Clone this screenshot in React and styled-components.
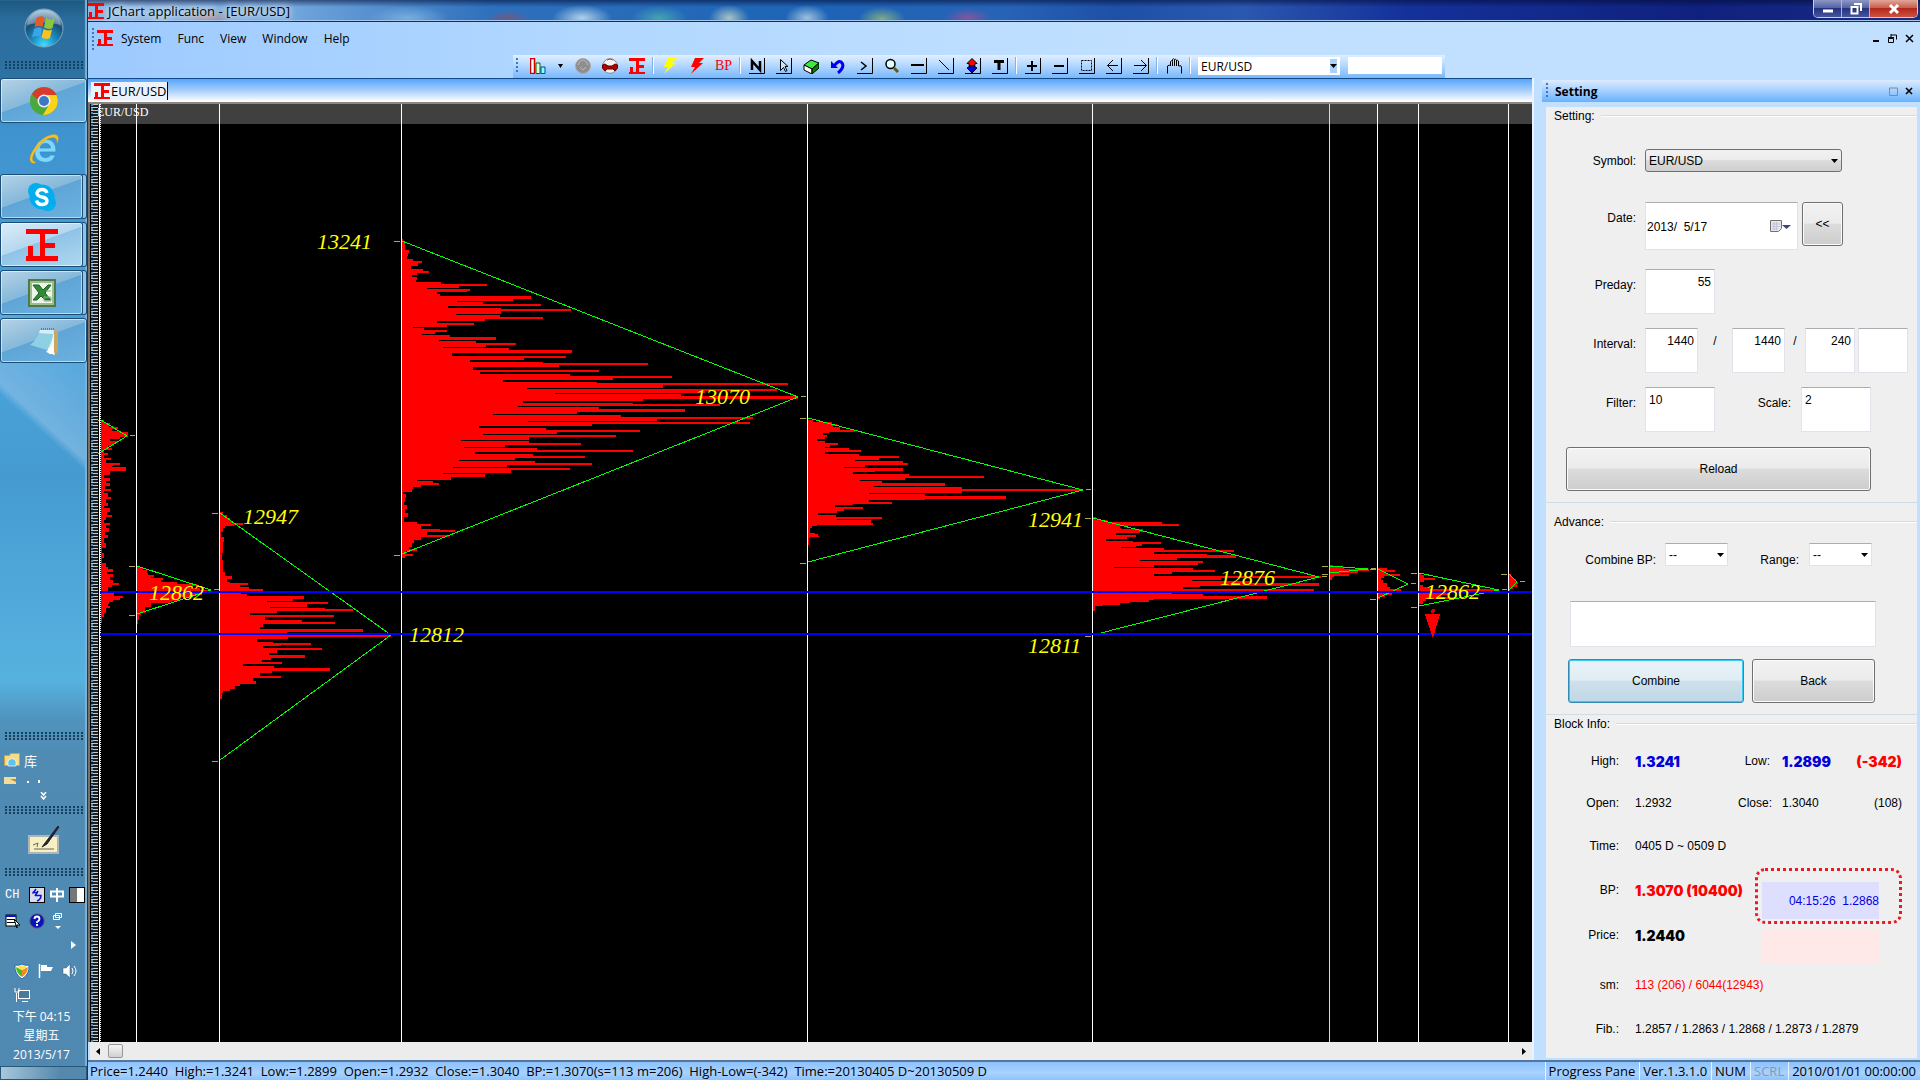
import React from 'react';
import styled, { createGlobalStyle, css } from 'styled-components';

const ui = '"Open Sans", "Noto Sans", "Noto Sans CJK SC", sans-serif';
const form = '"Liberation Sans", Arial, sans-serif';

const GlobalStyle = createGlobalStyle`
  *, *::before, *::after { box-sizing: border-box; }
  body { margin: 0; font-family: ${ui}; font-size: 12px; color: #000; }
  button, input, select, textarea { font: inherit; color: inherit; margin: 0; border-radius: 0; }
  svg { display: block; }
`;

/* ---------- desktop shell ---------- */

const Desktop = styled.div`
  display: grid;
  grid-template-columns: 88px minmax(0, 1fr);
  height: 100vh;
  overflow: hidden;
`;

const Taskbar = styled.aside`
  display: flex;
  flex-direction: column;
  min-height: 0;
  border-right: 1px solid #173a58;
  box-shadow: inset -2px 0 1px #7fb2d4;
  background:
    linear-gradient(42deg, transparent 38%, rgba(150, 195, 232, .55) 42%, transparent 90%) 0 300px / 87px 200px no-repeat,
    linear-gradient(#1d5880 0, #2a6d9d 20px, #2e72a4 76px, #3f93cf 130px, #4aa3dc 360px, #459bd0 480px, #52abdc 620px, #56b2df 680px, #4f93bd 720px, #508bb3 760px, #4f89b2 100%);
`;

const StartButton = styled.button`
  align-self: center;
  margin: 8px 0 13px;
  padding: 0;
  border: 0;
  background: none;
`;

const DotGrip = styled.div`
  flex: none;
  height: 9px;
  margin: 0 4px;
  background: radial-gradient(circle at 2px 1px, #173f5e 0, #173f5e 1px, transparent 1px) 0 0 / 4px 3px;
`;

const TaskList = styled.div`
  display: flex;
  flex-direction: column;
  gap: 3px;
  margin-top: 8px;
`;

const TaskButton = styled.button`
  display: flex;
  align-items: center;
  justify-content: center;
  height: 45px;
  width: ${p => (p.$stacked ? '83px' : '87px')};
  padding: 0;
  border: 1px solid ${p => (p.$plain ? 'transparent' : '#1c4d74')};
  border-radius: 3px;
  background: ${p =>
    p.$plain
      ? 'none'
      : p.$active
      ? 'linear-gradient(160deg, #dcedf8 0, #b4d8ef 45%, #8fc3e6 46%, #b0d8f0 100%)'
      : 'linear-gradient(160deg, #b5d3e6 0, #85b8da 45%, #5fa5d6 46%, #6cb2e0 100%)'};
  box-shadow: ${p => (p.$plain ? 'none' : 'inset 0 0 0 1px rgba(255,255,255,.55)')}${p => (p.$stacked ? ', 4px 0 0 -1px #8fc4e8, 4px 0 0 0 #1c4d74' : '')};
`;

const Spacer = styled.div`
  flex: 1;
`;

const Libraries = styled.div`
  height: 65px;
  padding: 9px 4px 0;
  color: #fff;
  font-size: 13px;
`;

const LibraryRow = styled.div`
  display: flex;
  align-items: center;
  gap: 4px;
  height: 20px;
`;

const Chevron = styled.div`
  display: flex;
  justify-content: center;
  padding-top: 2px;
`;

const TabletInput = styled.div`
  display: flex;
  justify-content: center;
  padding: 10px 0 14px;
`;

const ImeBar = styled.div`
  display: grid;
  grid-template-columns: 20px 16px 16px 16px;
  gap: 10px 4px;
  align-items: center;
  padding: 10px 0 0 5px;
  color: #fff;
  font: 12px/16px "Liberation Mono", monospace;
`;

const Tray = styled.div`
  display: grid;
  grid-template-columns: 16px 16px 16px;
  gap: 8px;
  padding: 4px 0 0 14px;
`;

const TrayExpand = styled.div`
  display: flex;
  justify-content: flex-end;
  padding: 12px 11px 10px;
`;

const Clock = styled.div`
  display: flex;
  flex-direction: column;
  padding: 4px 4px 0 0;
  color: #fff;
  text-align: center;
  font-size: 12px;
  line-height: 19px;
`;

const ShowDesktop = styled.button`
  flex: none;
  height: 14px;
  margin-top: 2px;
  padding: 0;
  border: 1px solid #2a5878;
  background: linear-gradient(100deg, #a9c8dc, #5488ac 70%);
`;

/* ---------- application window ---------- */

const Window = styled.main`
  display: flex;
  flex-direction: column;
  min-width: 0;
  min-height: 0;
  background: #c1e0ff;
`;

const TitleBar = styled.header`
  display: flex;
  align-items: stretch;
  height: 22px;
  border-bottom: 1px solid #1c2c50;
  box-shadow: inset 0 -1px 0 #a8c4e8;
  background:
    linear-gradient(rgba(0, 10, 50, .55), transparent 7px),
    radial-gradient(ellipse 32px 12px at 120px 20px, rgba(190, 130, 120, .7), transparent),
    radial-gradient(ellipse 40px 12px at 320px 18px, rgba(140, 190, 230, .7), transparent),
    radial-gradient(ellipse 22px 10px at 420px 20px, rgba(140, 80, 110, .8), transparent),
    radial-gradient(ellipse 30px 13px at 494px 18px, rgba(190, 220, 240, .9), transparent),
    radial-gradient(ellipse 28px 12px at 571px 18px, rgba(70, 170, 180, .9), transparent),
    radial-gradient(ellipse 20px 13px at 641px 18px, rgba(200, 220, 200, .8), transparent),
    radial-gradient(ellipse 22px 13px at 719px 18px, rgba(190, 215, 230, .8), transparent),
    radial-gradient(ellipse 24px 12px at 794px 19px, rgba(150, 190, 120, .8), transparent),
    radial-gradient(ellipse 24px 10px at 880px 18px, rgba(170, 80, 150, .7), transparent),
    linear-gradient(90deg, #8db9e4 0, #78abe0 10%, #2e70bc 22%, #1d64b6 40%, #2763b6 50%, #1e50a8 56%, #2b58b0 63%, #14319a 72%, #10207e 88%, #182c84 100%);
`;

const TitleText = styled.h1`
  flex: 1;
  display: flex;
  align-items: center;
  gap: 4px;
  margin: 0;
  font-size: 13px;
  font-weight: 400;
  text-shadow: 0 0 6px #fff, 0 0 10px #fff;
`;

const WindowControls = styled.div`
  display: flex;
  height: 18px;
  margin-right: 2px;
  border: 1px solid #c2cfe6;
  border-top: 0;
  border-radius: 0 0 5px 5px;
  overflow: hidden;
`;

const WindowButton = styled.button`
  display: flex;
  align-items: center;
  justify-content: center;
  width: ${p => (p.$close ? 47 : 28)}px;
  padding: 0;
  border: 0;
  border-right: ${p => (p.$close ? 0 : '1px solid #a9b8d8')};
  background: ${p =>
    p.$close
      ? 'linear-gradient(#e0a79a 0, #cc5f4c 45%, #b12a1c 50%, #cf5140 100%)'
      : 'linear-gradient(#8d97c4 0, #5563a4 45%, #24347f 50%, #46559c 100%)'};
`;

const MenuBar = styled.nav`
  display: flex;
  align-items: center;
  height: 33px;
  padding: 0 6px 0 4px;
  background: linear-gradient(90deg, #9dcaff, #b2d8ff 28%, #c1e0ff 58%);
`;

const Grip = styled.span`
  width: 2px;
  height: ${p => p.$h || 16}px;
  background: repeating-linear-gradient(#3c78c0 0 2px, transparent 2px 4px);
`;

const MenuList = styled.div`
  flex: 1;
  display: flex;
  gap: 16px;
  padding: 0 0 0 8px;
`;

const MenuItem = styled.button`
  padding: 0;
  border: 0;
  background: none;
  font-size: 12px;
  line-height: 16px;
`;

const MenuIcon = styled.span`
  padding: 0 0 1px 3px;
`;

const ChildControls = styled.div`
  display: flex;
  gap: 8px;
`;

const FlatButton = styled.button`
  display: flex;
  padding: 0;
  border: 0;
  background: none;
`;

const ToolbarDock = styled.div`
  display: flex;
  height: 23px;
  padding-left: 425px;
  background: linear-gradient(90deg, #9dcaff, #b2d8ff 28%, #c1e0ff 58%);
`;

const Toolbar = styled.div`
  display: flex;
  align-items: center;
  padding: 0 3px 2px;
  background: linear-gradient(#e2efff, #aed5ff 50%, #79b7fb);
`;

const ToolButton = styled.button`
  display: flex;
  justify-content: center;
  width: ${p => (p.$narrow ? 18 : 27)}px;
  padding: 0;
  border: 0;
  background: none;
  font: 14px/16px "Liberation Serif", serif;
  color: #f00;
`;

const ToolGrip = styled(Grip)`
  margin-right: 6px;
`;

const Separator = styled.span`
  width: 2px;
  height: 17px;
  margin: 0 2px;
  background: linear-gradient(90deg, #7fb3ec 50%, #fff 50%);
`;

const SelectBox = styled.span`
  display: grid;
  grid-template-columns: minmax(0, 1fr) ${p => p.$arrow || 16}px;
  align-items: center;
  width: ${p => p.$w}px;

  select {
    grid-area: 1 / 1 / 2 / 3;
    width: 100%;
    appearance: none;
    ${p => p.$kind === 'tool' && css`
      height: 18px; padding: 0 2px; border: 1px solid #fff; background: #fff; font: 12px "Open Sans", sans-serif;
    `}
    ${p => p.$kind === 'button' && css`
      height: 23px; padding: 0 3px; border: 1px solid #707070; border-radius: 3px;
      background: linear-gradient(#f2f2f2 0, #ebebeb 48%, #dcdcdc 50%, #cfcfcf 100%);
    `}
    ${p => p.$kind === 'field' && css`
      height: 23px; padding: 0 3px; border: 1px solid #e2e3ea; border-top-color: #abadb3; background: #fff;
    `}
  }
  svg {
    grid-area: 1 / 2;
    justify-self: center;
    pointer-events: none;
  }
`;

const ToolSelect = styled(SelectBox)`
  margin: 0 8px 0 5px;

  svg { background: #a9d1fb; }
`;

const ToolInput = styled.input`
  width: 94px;
  height: 17px;
  border: 0;
  background: #fff;
`;

const Body = styled.div`
  flex: 1;
  display: grid;
  grid-template-columns: minmax(0, 1fr) 378px;
  gap: 8px;
  min-height: 0;
`;

/* ---------- chart document ---------- */

const Document = styled.section`
  display: flex;
  flex-direction: column;
  min-height: 0;
  border-right: 2px solid #eaf4ff;
`;

const TabStrip = styled.div`
  height: 24px;
  padding: 3px 3px 0;
  border-top: 1px solid #0f4b8c;
  background: linear-gradient(#58a5fa, #a8cffc 50%, #f4f9ff 92%, #fff);
`;

const Tab = styled.button`
  display: flex;
  align-items: center;
  gap: 1px;
  height: 18px;
  padding: 0 0 0 3px;
  border: 0;
  border-right: 1px solid #000;
  background: #eaf3fd;
  font-size: 13px;
  line-height: 18px;
`;

const ChartFrame = styled.div`
  flex: 1;
  display: grid;
  grid-template-columns: 8px minmax(0, 1fr);
  min-height: 0;
  border-top: 2px solid #8f8880;
  border-left: 2px solid #77726c;
  background: #000;
`;

const Ruler = styled.div`
  margin-left: 1px;
  background: repeating-linear-gradient(#ccc8b8 0 1px, #15202c 1px 3px);
  border-left: 2px dotted #4d86b8;
`;

const Plot = styled.svg`
  width: 100%;
  height: 100%;
  min-height: 0;
  text { font-family: "Liberation Serif", "Times New Roman", serif; }
`;

const ScrollBar = styled.div`
  flex: none;
  display: flex;
  align-items: center;
  height: 18px;
  margin-left: 2px;
  padding: 0 6px;
  background: #ececec;
`;

const ScrollThumb = styled.span`
  flex: none;
  width: 15px;
  height: 14px;
  margin: 0 auto 0 8px;
  border: 1px solid #979797;
  border-radius: 2px;
  background: linear-gradient(#f6f6f6, #d0d0d2);
`;

/* ---------- setting pane ---------- */

const Pane = styled.aside`
  display: flex;
  flex-direction: column;
  min-height: 0;
  padding: 2px 0 2px;
  font-family: ${form};
`;

const PaneHeader = styled.header`
  display: flex;
  align-items: center;
  gap: 7px;
  height: 22px;
  padding: 0 7px 0 4px;
  background: linear-gradient(#dcecff, #a5cfff 50%, #68b0fc);
`;

const PaneTitle = styled.h2`
  flex: 1;
  margin: 0;
  font: 700 12px ${ui};
`;

const PaneBody = styled.div`
  flex: 1;
  margin: 5px 3px 0 4px;
  background: #efefef;
`;

const Group = styled.section`
  padding: ${p => p.$pt || 0}px 0 ${p => p.$pb || 0}px;
  border-bottom: ${p => (p.$last ? 0 : '1px solid #d0dde4')};
`;

const GroupTitle = styled.h3`
  display: flex;
  align-items: center;
  gap: 6px;
  height: 18px;
  margin: 0;
  padding-left: 8px;
  font-size: 12px;
  font-weight: 400;

  &::after {
    content: '';
    flex: 1;
    height: 2px;
    background: linear-gradient(#d0dde4 50%, #fff 50%);
  }
`;

const Row = styled.div`
  display: flex;
  align-items: flex-start;
  margin-top: ${p => p.$mt}px;
`;

const Label = styled.label`
  width: ${p => p.$w || 90}px;
  margin-right: ${p => p.$gap || 9}px;
  padding-top: ${p => (p.$pt === undefined ? 8 : p.$pt)}px;
  line-height: 16px;
  text-align: right;
`;

const fieldBorder = css`
  border: 1px solid #e2e3ea;
  border-top-color: #abadb3;
  background: #fff;
`;

const Field = styled.input`
  ${fieldBorder}
  width: ${p => p.$w}px;
  height: 45px;
  padding: 3px 3px 23px;
  line-height: 16px;
  text-align: ${p => p.$align || 'right'};
`;

const Slash = styled.span`
  width: ${p => p.$w}px;
  padding-top: 5px;
  line-height: 16px;
  text-align: center;
`;

const DateField = styled.div`
  ${fieldBorder}
  display: flex;
  align-items: center;
  width: 153px;
  height: 48px;
  margin-right: 4px;
  padding: 2px 6px 0 1px;

  input {
    flex: 1;
    min-width: 0;
    padding: 0;
    border: 0;
    background: none;
  }
`;

const PushButton = styled.button`
  flex: ${p => (p.$w ? 'none' : '1')};
  width: ${p => (p.$w ? p.$w + 'px' : 'auto')};
  height: 44px;
  border: 1px solid #707070;
  border-radius: 3px;
  padding: 0;
  background: linear-gradient(#f2f2f2 0, #ebebeb 48%, #dcdcdc 50%, #cdcdcd 100%);
  box-shadow: inset 0 0 0 1px #fbfbfb;
  ${p => p.$focus && css`
    border-color: #2f8ab8;
    background: linear-gradient(#eaf2f8 0, #e0edf5 48%, #cfe0ec 50%, #bfd7e6 100%);
    box-shadow: inset 0 0 0 1px #35cdf5;
  `}
`;

const ButtonRow = styled.div`
  display: flex;
  gap: 8px;
  margin: ${p => p.$m};
`;

const Memo = styled.textarea`
  ${fieldBorder}
  display: block;
  width: 306px;
  height: 46px;
  margin: 33px 0 0 24px;
  resize: none;
`;

const Info = styled.dl`
  display: grid;
  grid-template-columns: 73px 119px 32px 48px 1fr;
  grid-template-rows: 42px 42px 44px 44px 46px 54px 34px;
  align-items: center;
  margin: 7px 15px 0 0;

  dt { grid-column-start: ${p => p.$first || 'auto'}; text-align: right; white-space: nowrap; }
  dd { margin: 0; padding-left: 16px; white-space: nowrap; }
`;

const Value = styled.dd`
  grid-column: ${p => p.$span || 'auto'};
  color: ${p => p.$color || 'inherit'};
  text-align: ${p => p.$align || 'left'};
  ${p => p.$strong && css`font: 900 14px Inter, "Liberation Sans", sans-serif;`}
`;

const Low = styled(Value)`
  && { padding-left: 12px; }
`;

const Quotes = styled.div`
  grid-area: 4 / 3 / 6 / 6;
  align-self: start;
  width: 147px;
  justify-self: end;
`;

const QuoteRing = styled.div`
  padding: 11px 20px 2px 4px;
  border: 3px dotted #f01820;
  border-radius: 10px;
`;

const Bid = styled.output`
  display: block;
  height: 37px;
  padding-top: 2px;
  background: #dedeff;
  color: #00d;
  line-height: 35px;
  text-align: right;
  white-space: pre;
`;

const Ask = styled.output`
  display: block;
  width: 117px;
  height: 35px;
  margin: 5px 0 0 7px;
  background: #ffe8e8;
`;

/* ---------- status bar ---------- */

const StatusBar = styled.footer`
  display: flex;
  align-items: center;
  height: 20px;
  border-top: 2px solid #54769c;
  background: linear-gradient(#8cc2fc, #a9d2ff 60%, #8ec3fc);
  font-size: 13px;
  line-height: 18px;
  white-space: pre;
`;

const StatusText = styled.span`
  flex: 1;
  padding-left: 2px;
`;

const StatusCell = styled.span`
  padding: 0 4px 0 3px;
  border-left: 1px solid #e8f3ff;
  color: ${p => (p.$off ? '#8899aa' : 'inherit')};
`;

/* ---------- drawings ---------- */

const Mark = ({ size = 16 }) => (
  <svg width={size} height={size} viewBox="0 0 32 32" fill="#f00" aria-hidden="true" shapeRendering="crispEdges">
    <path d="M0 0h32v5H19v9h10v5H19v8h13v5H0v-5h2V17h5v10h7V5H0z" />
  </svg>
);

const Caret = ({ w = 7, color = '#000' }) => (
  <svg width={w} height="14" viewBox={`0 0 ${w} 14`} aria-hidden="true">
    <path d={`M0 5h${w}L${w / 2} 9z`} fill={color} />
  </svg>
);

const Icon = ({ children, size = 16, box = 16 }) => (
  <svg width={size} height={size} viewBox={`0 0 ${box} ${box}`} fill="none" stroke="#000" aria-hidden="true">{children}</svg>
);

const Corner = () => <path d="M0 15.500H15.500V0" />;

const Orb = () => (
  <svg width="40" height="40" viewBox="0 0 40 40" aria-hidden="true">
    <defs>
      <radialGradient id="orb" cx=".5" cy=".95" r=".9">
        <stop offset="0" stopColor="#3fe0ff" /><stop offset=".35" stopColor="#1b8fc4" />
        <stop offset=".7" stopColor="#1a4f78" /><stop offset="1" stopColor="#8ab0c8" />
      </radialGradient>
    </defs>
    <circle cx="20" cy="20" r="19" fill="url(#orb)" stroke="#7fa6c0" />
    <path d="M3 17a17 15 0 0 1 34 0q-17-5-34 0z" fill="#fff" opacity=".3" />
    <path d="M12.500 10q4-3 8-.5L18.500 19q-4-2-8 .5z" fill="#e85a24" />
    <path d="M22 10q4 2.500 9 .5L28.500 20q-4 2-8.500-.5z" fill="#8cc63a" />
    <path d="M10 21q4-3 8-.5L16.500 29q-4-2-8.500.5z" fill="#3ba4e8" />
    <path d="M19.500 21q4 2.500 8.500.5L26 30q-4 2-8.500-.5z" fill="#fbc020" />
  </svg>
);

const Chrome = () => (
  <Icon size={30} box={30}>
    <g stroke="none">
      <circle cx="15" cy="15" r="14" fill="#4aa83c" />
      <path d="M2.900 8A14 14 0 0 1 27.500 9H15L9 14z" fill="#d93a2b" />
      <path d="M27.500 9A14 14 0 0 1 14 29l6.500-11L15 9z" fill="#fcd31c" />
      <circle cx="15" cy="15" r="6.500" fill="#eef2f6" /><circle cx="15" cy="15" r="5" fill="#3c78c4" />
    </g>
  </Icon>
);

const Explorer = () => (
  <Icon size={32} box={32}>
    <path d="M28 19H12q.5 5.500 5.500 5.500 3.500 0 5-2.500h5Q25 29.500 17.500 29.500 6.500 29 6.500 18 7.500 6.500 17.500 6 28.500 6.500 28 19zM12 15h10.500q-.5-4.500-5-4.500T12 15z" fill="#7fd6f8" stroke="#2a8cc8" strokeWidth=".7" />
    <path d="M6 30.500Q-2 29 5.500 16.500 14 3 25 1.500q8-.5 4 9 .5-6-4-6-8 .5-14.500 9T4.500 26q0 3 3.500 3z" fill="#f8c21c" stroke="#d89a10" strokeWidth=".4" />
  </Icon>
);

const Skype = () => (
  <Icon size={30} box={30}>
    <g stroke="none">
      <circle cx="9" cy="9" r="8" fill="#00aef0" /><circle cx="21" cy="21" r="8" fill="#00aef0" /><circle cx="15" cy="15" r="12.500" fill="#00aef0" />
    </g>
    <path d="M20 11q-1-3.500-5-3.500T10 11q0 3 5 4t5 4.200q-.5 3.300-5 3.300t-5.500-4" stroke="#fff" strokeWidth="3.400" />
  </Icon>
);

const Excel = () => (
  <Icon size={28} box={28}>
    <rect x="1" y="1" width="26" height="26" fill="#9cbf90" stroke="#4f7a48" strokeWidth="2" />
    <rect x="4" y="4" width="20" height="20" fill="#eef6ec" stroke="none" />
    <path d="M5 6h6l4 5 5-5h3l-6 8 6 7h-6l-4-4-4 4H5l6-7z" fill="#2f8a34" stroke="#1f5f24" />
    <path d="M16 18h7v4h-7zM18 12h5" stroke="#8fb488" />
  </Icon>
);

const Notepad = () => (
  <Icon size={30} box={30}>
    <g stroke="none">
      <path d="M25 3l4 3v20l-4 3z" fill="#c8a860" />
      <path d="M12 4h13v24h-5z" fill="#f0f6f8" /><path d="M11 4h14q-2 14-7 20L1 19Q8 14 11 4z" fill="#8fd0e4" />
      <path d="M11 4h14l-1 4-14-1z" fill="#d8eef6" /><path d="M17 26l6-6 3 9z" fill="#fff" />
    </g>
    <path d="M12 3h13" stroke="#777" strokeWidth="2" strokeDasharray="1 1" />
  </Icon>
);

const Folder = () => (
  <Icon>
    <path d="M.5 3.500h5l1-2h9v12H.5z" fill="#f6dc86" stroke="#c9a544" />
    <path d="M4 14V9q4-5 8 0v5z" fill="#5ec4ee" stroke="#fff" strokeWidth=".7" />
  </Icon>
);

const Pen = () => (
  <svg width="32" height="29" viewBox="0 0 32 29" fill="none" aria-hidden="true">
    <rect x="1" y="11" width="29" height="17" fill="#f7f0c2" stroke="#aeb4b8" strokeWidth="2" />
    <path d="M5 20l5-2-1 4M6 24h20" stroke="#665" />
    <path d="M30 1L17 18l-3 4 5-3L31 2z" fill="#222" stroke="#223" />
  </svg>
);

const toolGroups = [
  [
    ['Ball off', <Icon><circle cx="8" cy="8" r="7.500" fill="#8e8e8e" stroke="#aaa" /><path d="M3 7q2-5 5-5t5 5M5 9l3 3 3-3" stroke="#bbb" /></Icon>],
    ['Ball on', <Icon><circle cx="8" cy="8" r="7.300" fill="#f4f4f4" stroke="#888" /><path d="M.5 7L3 6l3 2h4l3-2 2.500 1v3L13 13l-2-2H5l-2 2-2.500-3z" fill="#b00000" stroke="#600" /><path d="M5 2q3-2 6 0" stroke="#b44" /></Icon>],
    ['Main', <Mark />],
  ],
  [
    ['Flash yellow', <Icon><path d="M6 0h9l-5 5h4L2 16l4-7H2z" fill="#ff0" stroke="none" /></Icon>],
    ['Flash red', <Icon><path d="M6 0h9l-5 5h4L2 16l4-7H2z" fill="#f00" stroke="none" /></Icon>],
    [null, 'BP'],
  ],
  [
    ['N', <Icon><Corner /><path d="M3 12V3l8 9V3" strokeWidth="2.500" /></Icon>],
    ['Pointer', <Icon><Corner /><path d="M4.500 1.500v11l3-3 2 4 1.500-1-2-4H12z" fill="#c9e2ff" /></Icon>],
    ['Eraser', <Icon><path d="M1 7l7-5 8 3-7 6z" fill="#3ee83e" /><path d="M1 7l8 4v5l-8-4z" fill="#fff" /><path d="M9 11l7-6v5l-7 6z" fill="#087a08" /></Icon>],
    ['Undo', <Icon><path d="M4 8q5-7 8-3t-4 10" stroke="#00e" strokeWidth="3" /><path d="M1 3v7h7z" fill="#00e" stroke="none" /></Icon>],
    ['Next', <Icon><Corner /><path d="M4 4l5 4-5 4" strokeWidth="1.500" /></Icon>],
    ['Zoom', <Icon><circle cx="6.500" cy="6" r="4.500" fill="#dff" strokeWidth="1.500" /><path d="M10 10l4 4" stroke="#665a10" strokeWidth="3" /></Icon>],
    ['Horizontal', <Icon><Corner /><path d="M0 7h13" strokeWidth="2" /></Icon>],
    ['Trend', <Icon><Corner /><path d="M1 2l10 10" /></Icon>],
    ['Up down', <Icon><Corner /><path d="M7 .5l5 5h-2v2H4v-2H2z" fill="#f00" /><path d="M7 15l5-5-2-1V8H4v1l-2 1z" fill="#00e" /></Icon>],
    ['Text', <Icon><Corner /><path d="M2 3.500h10M7 3v9" strokeWidth="3" /></Icon>],
  ],
  [
    ['Zoom in', <Icon><Corner /><path d="M2 8h10M7 3v10" strokeWidth="2" /></Icon>],
    ['Zoom out', <Icon><Corner /><path d="M2 8h10" strokeWidth="2" /></Icon>],
    ['Select', <Icon><Corner /><path d="M2.500 2.500h10v10h-10z" strokeDasharray="2 1" /></Icon>],
    ['Left', <Icon><Corner /><path d="M12 7.500H1.500M7 2L1.500 7.500 7 13" /></Icon>],
    ['Right', <Icon><Corner /><path d="M1 7.500h12M8 2l5.500 5.500L8 13" /></Icon>],
  ],
  [
    ['Pan', <Icon><path d="M1.500 15.500V8l2-1 1 1V3.500q1-1.500 2 0V8M6.500 3V1.500q1-1.500 2 0V8M8.500 2q1-1.500 2 0V8M10.500 3q1-1.500 2 0v5q3-1 3 1v6.500" /></Icon>],
  ],
];

/* ---------- chart data ---------- */

/* Each profile is a run of "offset:length" samples in ticks, measured from the profile's own origin. */
const profiles = [
  { x: 101, y: 400, base: 62, end: 668, tick: 3, rows: '60:70 68:90 75:85 80:112 86:96 92:120 97:142 110:120 118:90 122:112 130:100 138:84 144:95 150:72 158:84 165:72 174:92 180:78 188:118 194:100 198:96 202:136 212:90 218:88 226:72 234:88 242:76 250:88 258:74 266:92 272:70 280:84 290:92 298:76 308:82 318:70 325:90 335:80 345:94 352:76 360:70 368:90 376:78 385:86 395:74 405:82 415:70 430:78 445:66 460:70 475:64 490:78 500:82 507:98 515:80 522:98 532:88 540:98 548:116 556:94 562:82 570:84 580:100 588:128 594:118 600:98 606:86 612:84 618:90 624:76 640:70 650:66' },
  { x: 137, y: 400, base: 171, end: 672, tick: 3, rows: '497:180 503:190 510:200 518:204 524:222 530:212 535:250 540:242 545:292 551:350 557:330 563:360 569:390 577:366 584:340 590:300 596:290 602:276 607:270 609:212 617:212 622:196 630:196 640:184 646:177 660:175' },
  { x: 220, y: 400, base: 420, end: 896, tick: 3, rows: '335:430 345:440 355:450 364:460 368:488 375:462 378:435 385:428 395:424 410:432 425:430 440:430 460:426 480:428 500:430 515:436 528:455 538:440 545:450 548:503 555:480 562:508 568:550 574:484 582:500 588:671 596:640 602:560 606:744 612:680 620:570 624:736 628:820 634:592 640:510 646:762 652:555 660:665 667:765 672:550 680:540 687:850 696:620 706:934 711:625 716:530 725:580 728:692 734:602 738:550 744:725 750:592 758:568 766:675 774:572 780:545 786:605 792:490 798:582 804:750 812:576 820:540 828:603 834:520 843:528 851:480 858:466 866:450 872:430 880:426' },
  { x: 402, y: 220, base: 66, end: 1014, tick: 3, rows: '58:68 66:75 74:76 82:76 90:88 100:84 108:80 116:100 122:126 130:114 138:92 146:100 148:130 153:147 159:110 164:96 172:112 180:108 186:184 192:320 197:238 203:140 207:270 212:262 216:170 222:180 228:453 236:398 242:230 247:308 252:482 257:205 264:362 268:574 274:362 282:228 286:360 291:490 297:314 303:170 309:282 314:200 320:98 324:132 330:200 336:165 342:125 346:210 352:348 359:178 363:288 370:407 375:318 381:190 384:386 390:575 398:216 408:558 413:432 420:270 425:488 430:804 436:538 441:280 450:658 457:300 462:570 468:875 474:698 480:370 487:652 490:1224 496:850 504:442 508:1190 514:975 520:525 523:904 528:1254 536:788 543:428 548:758 552:1020 557:414 562:656 568:916 575:590 582:340 586:724 591:1118 597:830 603:443 606:1110 613:636 619:296 625:498 630:780 636:530 642:308 646:707 652:448 659:244 664:448 669:602 675:374 681:252 685:470 690:758 696:284 702:458 708:614 714:405 720:238 724:464 729:636 735:382 742:218 745:570 751:392 759:188 763:315 770:214 779:110 782:158 790:176 796:122 800:100 808:96 815:70 822:78 835:76 845:72 855:80 868:74 880:84 892:72 906:112 912:154 918:122 926:180 930:226 936:140 945:206 951:124 960:102 970:96 980:86 988:110 994:78 1002:98 1008:76' },
  { x: 808, y: 380, base: 84, end: 496, tick: 3, rows: '120:98 126:156 132:172 137:160 142:180 150:225 155:146 160:130 165:140 170:136 176:112 182:134 190:174 195:150 200:134 204:206 210:242 215:135 222:238 228:356 234:296 240:226 243:368 249:384 255:256 261:192 264:368 272:286 276:220 282:388 288:612 294:376 299:240 304:306 309:496 317:282 321:546 327:910 333:546 339:268 343:436 348:678 356:436 361:268 366:336 371:218 376:166 381:250 388:192 394:170 398:114 404:168 411:305 418:172 421:274 428:278 434:112 438:96 444:90 458:106 462:114 467:118 472:90 474:87' },
  { x: 1093, y: 490, base: 270, end: 362, tick: 2.9, rows: '82:280 90:310 96:470 101:520 107:348 114:350 118:414 125:405 130:338 136:396 142:370 147:308 152:386 155:466 162:412 167:396 172:350 174:476 180:680 186:448 191:600 195:685 203:513 209:406 213:588 219:574 225:448 230:330 234:560 240:624 247:500 252:448 258:930 264:640 270:558 273:728 279:925 287:580 292:530 296:910 303:750 309:500 313:588 317:775 327:448 330:432 335:376 340:348 346:300 349:276' },
  { x: 1330, y: 490, base: 958, end: 270, tick: 2.9, rows: '226:966 232:1000 237:1070 243:1040 249:990 252:1012 257:970 262:964' },
  { x: 1378, y: 490, base: 1098, end: 328, tick: 2.9, rows: '233:1124 240:1146 246:1120 252:1161 257:1116 263:1108 270:1112 280:1124 290:1134 296:1166 303:1134 309:1140 315:1118 322:1104' },
  { x: 1419, y: 490, base: 1217, end: 342, tick: 2.9, rows: '248:1224 256:1232 264:1264 270:1232 276:1220 284:1228 290:1250 296:1440 303:1380 310:1300 316:1280 320:1330 326:1236 334:1230' },
  { x: 1509, y: 490, base: 1478, end: 302, tick: 2.9, rows: '253:1484 260:1490 268:1498 275:1504 282:1500 290:1490 298:1482' },
];

const outline = p => {
  const rows = p.rows.split(' ').map(r => r.split(':').map(Number));
  return rows
    .map(([top, reach], i) => {
      const y = p.y + Math.round(top / 3);
      const bottom = p.y + Math.round((i + 1 < rows.length ? rows[i + 1][0] : p.end) / 3);
      const w = Math.round((reach - p.base) / p.tick);
      return `M${p.x} ${y}h${w}V${bottom}H${p.x}z`;
    })
    .join('');
};

const cones = [
  [101, 420, 127, 436, 452], [137, 566, 211, 590, 614], [220, 513, 391, 635, 760],
  [402, 241, 798, 397, 554], [808, 418, 1083, 490, 562], [1093, 518, 1319, 577, 635],
  [1330, 566, 1368, 569, 573], [1378, 569, 1408, 584, 598], [1419, 573, 1499, 590, 606], [1509, 574, 1517, 582, 590],
];

const dividers = [136, 219, 401, 807, 1092, 1377, 1418, 1508];

const labels = [
  [317, 249, '13241'], [243, 524, '12947'], [149, 600, '12862'], [409, 642, '12812'], [695, 404, '13070'],
  [1028, 527, '12941'], [1028, 653, '12811'], [1220, 585, '12876'], [1425, 599, '12862'],
];

function Chart() {
  return (
    <Plot role="img" aria-label="EUR/USD price profile">
      <g transform="translate(-98 -104)" shapeRendering="crispEdges">
        <rect x="98" y="104" width="100%" height="20" fill="#404040" />
        {profiles.map(p => <path key={p.x} d={outline(p)} fill="#f00" />)}
        {dividers.map(x => <path key={x} d={`M${x + 0.5} 104V2400`} stroke="#fff" />)}
        <path d="M1329.500 104V2400" stroke="#f4f400" />
        <path d="M99.500 104V2400" stroke="#fff" />
        <path d="M100.500 104V2400" stroke="#fff" strokeDasharray="1 1" />
        <g stroke="#0f0" fill="none">
          {cones.map(([x, a, tip, mid, b]) => <path key={x} d={`M${x} ${a}L${tip} ${mid}L${x} ${b}`} />)}
        </g>
        <path
          stroke="#b0a84c"
          d={cones.map(([x, a, tip, mid, b]) => `M${x - 8} ${a + 0.5}h6M${tip + 3} ${mid - 0.5}h5M${x - 8} ${b + 1.5}h6`).join('')}
        />
        <path d="M100 592H2400M100 634H2400" stroke="#00f" strokeWidth="2" />
        <path d="M1425 614h15l-7 24z" fill="#f00" />
        <circle cx="1433" cy="611" r="2" fill="#d00" />
        <text x="97" y="116" fill="#fff" fontSize="12">EUR/USD</text>
        <g fill="#ff0" fontSize="22" fontStyle="italic">
          {labels.map(([x, y, t]) => <text key={x + t} x={x} y={y}>{t}</text>)}
        </g>
      </g>
    </Plot>
  );
}

/* ---------- page ---------- */

function SideBar() {
  return (
    <Taskbar>
      <StartButton aria-label="Start"><Orb /></StartButton>
      <DotGrip />
      <TaskList>
        <TaskButton aria-label="Chrome"><Chrome /></TaskButton>
        <TaskButton aria-label="Internet Explorer" $plain><Explorer /></TaskButton>
        <TaskButton aria-label="Skype" $stacked><Skype /></TaskButton>
        <TaskButton aria-label="JChart" $stacked $active><Mark size={32} /></TaskButton>
        <TaskButton aria-label="Excel" $stacked><Excel /></TaskButton>
        <TaskButton aria-label="Notepad"><Notepad /></TaskButton>
      </TaskList>
      <Spacer />
      <DotGrip />
      <Libraries>
        <LibraryRow><Folder />库</LibraryRow>
        <LibraryRow>
          <svg width="12" height="7" viewBox="0 0 12 7" aria-hidden="true"><path d="M0 0h12v7H0z" fill="#f3dc98" /><path d="M6 2h6v3z" fill="#b98a3a" /></svg>
          <svg width="30" height="7" viewBox="0 0 30 7" fill="#fff" aria-hidden="true"><path d="M7 4h2v2H7zM18 3h2v3h-2z" /></svg>
        </LibraryRow>
        <Chevron>
          <svg width="7" height="8" viewBox="0 0 7 8" fill="none" stroke="#fff" strokeWidth="1.500" aria-hidden="true"><path d="M1 0l2.500 3L6 0M1 4l2.500 3L6 4" /></svg>
        </Chevron>
      </Libraries>
      <DotGrip />
      <TabletInput><Pen /></TabletInput>
      <DotGrip />
      <ImeBar>
        <span>CH</span>
        <Icon><rect x=".5" y=".5" width="15" height="15" fill="#d8dcec" /><path d="M7 2L3.500 6.500M4 5.500h5M7 8.500h5q0 4-4 5.500M9 4L6 9" stroke="#11c" strokeWidth="1.500" /></Icon>
        <Icon><path d="M2 4.500h12v5H2zM8 1v14" stroke="#fff" strokeWidth="2" /></Icon>
        <Icon><rect x=".5" y=".5" width="15" height="15" fill="#fff" /><rect x="1" y="1" width="7" height="14" fill="#777" stroke="none" /></Icon>
        <Icon><rect x="1" y="2" width="10" height="11" fill="#fff" /><path d="M1 3h10" stroke="#11c" strokeWidth="2" /><path d="M2 6.500h8M2 9.500h8M9 6l6 6h-3v3z" fill="#fff" /></Icon>
        <Icon><circle cx="8" cy="8" r="7.300" fill="#0a14b8" stroke="#667" /><path d="M5.500 6q0-2.500 2.500-2.500T10.500 6Q10.500 7.500 8 9v1M8 11v2" stroke="#fff" strokeWidth="1.800" /></Icon>
        <Icon><path d="M6.500.5h6v4h-6zM4.500 2.500h6v4h-6z" stroke="#fff" /><path d="M6 13h6l-3 3z" fill="#fff" stroke="none" /></Icon>
      </ImeBar>
      <TrayExpand><svg width="5" height="8" viewBox="0 0 5 8" aria-hidden="true"><path d="M0 0l5 4-5 4z" fill="#fff" /></svg></TrayExpand>
      <Tray>
        <Icon><path d="M1 2q4 1 7-1 3 2 7 1 1 9-7 14Q0 11 1 2z" fill="#fff" stroke="#1b6cc0" /><path d="M8 7l6-3q0 6-6 10z" fill="#f58a1c" stroke="none" /><path d="M8 7L2 4q0 6 6 10z" fill="#4fb82a" stroke="none" /><path d="M8 2l5 2-5 3-5-3z" fill="#fbe34c" stroke="none" /></Icon>
        <Icon><path d="M1.500 1v14" stroke="#fff" strokeWidth="1.500" /><path d="M3 2h6v2h6l-2 4h-4V8H3z" fill="#fff" stroke="none" /></Icon>
        <Icon><path d="M1 5h3l4-4v14l-4-4H1z" fill="#fff" stroke="#456" strokeWidth=".5" /><path d="M10 5q2 3 0 6M12 3q4 5 0 10" stroke="#fff" /></Icon>
        <Icon><rect x="4.500" y="3.500" width="11" height="8" fill="#477a9c" stroke="#fff" /><path d="M8 14.500h6M2.500 6v9M1 1v4h4V1" stroke="#fff" /></Icon>
      </Tray>
      <Clock><span>下午 04:15</span><span>星期五</span><span>2013/5/17</span></Clock>
      <ShowDesktop aria-label="Show desktop" />
    </Taskbar>
  );
}

function SettingPane() {
  return (
    <Pane>
      <PaneHeader>
        <Grip />
        <PaneTitle>Setting</PaneTitle>
        <FlatButton aria-label="Float"><Icon size={9} box={9}><path d="M.5 1h8v7.500h-8z" stroke="#888" /></Icon></FlatButton>
        <FlatButton aria-label="Close pane"><Icon size={8} box={8}><path d="M1 1l6 6M7 1L1 7" strokeWidth="1.600" /></Icon></FlatButton>
      </PaneHeader>
      <PaneBody>
        <Group $pb={11}>
          <GroupTitle>Setting:</GroupTitle>
          <Row $mt={24}>
            <Label htmlFor="symbol" $pt={4}>Symbol:</Label>
            <SelectBox $kind="button" $w={197}>
              <select id="symbol"><option>EUR/USD</option></select><Caret />
            </SelectBox>
          </Row>
          <Row $mt={30}>
            <Label htmlFor="date">Date:</Label>
            <DateField>
              <input id="date" defaultValue="2013/  5/17" />
              <FlatButton aria-label="Open calendar">
                <Icon size={12} box={12}><path d="M.5.500h11v8l-3 3h-8z" fill="#e4e6f0" stroke="#776e70" /><path d="M2 4h8M2 6.500h8M2 9h6M4 2v8M6.500 2v8" stroke="#c0c6d8" /></Icon>
                <Caret w={9} color="#334a78" />
              </FlatButton>
            </DateField>
            <PushButton $w={41}>&lt;&lt;</PushButton>
          </Row>
          <Row $mt={19}>
            <Label htmlFor="preday">Preday:</Label>
            <Field id="preday" $w={70} defaultValue="55" />
          </Row>
          <Row $mt={14}>
            <Label htmlFor="interval">Interval:</Label>
            <Field id="interval" $w={53} defaultValue="1440" />
            <Slash $w={34}>/</Slash>
            <Field aria-label="Second interval" $w={53} defaultValue="1440" />
            <Slash $w={20}>/</Slash>
            <Field aria-label="Third interval" $w={50} defaultValue="240" />
            <Slash $w={3} />
            <Field aria-label="Fourth interval" $w={50} />
          </Row>
          <Row $mt={14}>
            <Label htmlFor="filter">Filter:</Label>
            <Field id="filter" $w={70} $align="left" defaultValue="10" />
            <Label htmlFor="scale" $w={76} $gap={10}>Scale:</Label>
            <Field id="scale" $w={70} $align="left" defaultValue="2" />
          </Row>
          <ButtonRow $m="15px 46px 0 20px"><PushButton>Reload</PushButton></ButtonRow>
        </Group>
        <Group $pt={10} $pb={11}>
          <GroupTitle>Advance:</GroupTitle>
          <Row $mt={12}>
            <Label htmlFor="combine-bp" $w={110} $pt={9}>Combine BP:</Label>
            <SelectBox $kind="field" $w={63}>
              <select id="combine-bp"><option>--</option></select><Caret />
            </SelectBox>
            <Label htmlFor="range" $w={71} $gap={10} $pt={9}>Range:</Label>
            <SelectBox $kind="field" $w={63}>
              <select id="range"><option>--</option></select><Caret />
            </SelectBox>
          </Row>
          <Memo aria-label="Combine notes" />
          <ButtonRow $m="12px 42px 0 22px">
            <PushButton $focus>Combine</PushButton>
            <PushButton $w={123}>Back</PushButton>
          </ButtonRow>
        </Group>
        <Group $last>
          <GroupTitle>Block Info:</GroupTitle>
          <Info>
            <dt>High:</dt><Value $strong $color="#0000d8">1.3241</Value>
            <dt>Low:</dt><Low $strong $color="#0000d8">1.2899</Low>
            <Value $strong $color="#f00" $align="right">(-342)</Value>
            <dt>Open:</dt><Value>1.2932</Value>
            <dt>Close:</dt><Low>1.3040</Low><Value $align="right">(108)</Value>
            <dt>Time:</dt><Value $span="2 / 6">0405 D ~ 0509 D</Value>
            <dt>BP:</dt><Value $strong $color="#f00">1.3070 (10400)</Value>
            <Quotes>
              <QuoteRing><Bid>04:15:26  1.2868</Bid></QuoteRing>
              <Ask />
            </Quotes>
            <dt>Price:</dt><Value $strong>1.2440</Value>
            <dt>sm:</dt><Value $span="2 / 6" $color="#f00">113 (206) / 6044(12943)</Value>
            <dt>Fib.:</dt><Value $span="2 / 6">1.2857 / 1.2863 / 1.2868 / 1.2873 / 1.2879</Value>
          </Info>
        </Group>
      </PaneBody>
    </Pane>
  );
}

export default function App() {
  return (
    <>
      <GlobalStyle />
      <Desktop>
        <SideBar />
        <Window>
          <TitleBar>
            <TitleText><Mark />JChart application - [EUR/USD]</TitleText>
            <WindowControls>
              <WindowButton aria-label="Minimize"><Icon size={12} box={12}><path d="M1 8h10" stroke="#fff" strokeWidth="3" /></Icon></WindowButton>
              <WindowButton aria-label="Restore"><Icon size={12} box={12}><path d="M4 1h7v7M1.500 4h6v6.500h-6z" stroke="#fff" strokeWidth="2" /></Icon></WindowButton>
              <WindowButton aria-label="Close" $close><Icon size={12} box={12}><path d="M2 2l8 8M10 2l-8 8" stroke="#fff" strokeWidth="3" /></Icon></WindowButton>
            </WindowControls>
          </TitleBar>
          <MenuBar>
            <Grip $h={22} />
            <MenuIcon><Mark /></MenuIcon>
            <MenuList>
              {['System', 'Func', 'View', 'Window', 'Help'].map(m => <MenuItem key={m}>{m}</MenuItem>)}
            </MenuList>
            <ChildControls>
              <FlatButton aria-label="Minimize chart"><Icon size={8} box={8}><path d="M1 7h6" strokeWidth="2" /></Icon></FlatButton>
              <FlatButton aria-label="Restore chart"><Icon size={9} box={9}><path d="M3 1h5.500v4.500M3 0v3M.5 4.500h5v4h-5zM0 3.500h6" /></Icon></FlatButton>
              <FlatButton aria-label="Close chart"><Icon size={9} box={9}><path d="M1 1l7 7M8 1L1 8" strokeWidth="1.500" /></Icon></FlatButton>
            </ChildControls>
          </MenuBar>
          <ToolbarDock>
            <Toolbar>
              <ToolGrip />
              <ToolButton aria-label="Chart type"><Icon><path d="M.5.500h4v15h-4z" fill="#fff" stroke="#c00" strokeWidth="1.500" /><path d="M6 5h4v10.500H6z" fill="#dfd" stroke="#060" /><path d="M11 9h4v6.500h-4z" fill="#8ff" stroke="#04a" /></Icon></ToolButton>
              <ToolButton aria-label="Chart type list" $narrow><Caret w={5} /></ToolButton>
              {toolGroups.map((group, i) => (
                <React.Fragment key={i}>
                  {i > 0 && <Separator />}
                  {group.map(([name, icon], n) => <ToolButton key={n} aria-label={name || undefined}>{icon}</ToolButton>)}
                </React.Fragment>
              ))}
              <Separator />
              <ToolSelect $kind="tool" $arrow={13} $w={142}>
                <select aria-label="Instrument"><option>EUR/USD</option></select><Caret w={7} />
              </ToolSelect>
              <ToolInput aria-label="Quick entry" />
            </Toolbar>
          </ToolbarDock>
          <Body>
            <Document>
              <TabStrip><Tab><Mark />EUR/USD</Tab></TabStrip>
              <ChartFrame><Ruler /><Chart /></ChartFrame>
              <ScrollBar>
                <svg width="4" height="7" viewBox="0 0 4 7" aria-hidden="true"><path d="M4 0v7L0 3.500z" /></svg>
                <ScrollThumb />
                <svg width="4" height="7" viewBox="0 0 4 7" aria-hidden="true"><path d="M0 0v7l4-3.500z" /></svg>
              </ScrollBar>
            </Document>
            <SettingPane />
          </Body>
          <StatusBar>
            <StatusText>Price=1.2440  High:=1.3241  Low:=1.2899  Open:=1.2932  Close:=1.3040  BP:=1.3070(s=113 m=206)  High-Low=(-342)  Time:=20130405 D~20130509 D</StatusText>
            <StatusCell>Progress Pane</StatusCell>
            <StatusCell>Ver.1.3.1.0</StatusCell>
            <StatusCell>NUM</StatusCell>
            <StatusCell $off>SCRL</StatusCell>
            <StatusCell>2010/01/01 00:00:00</StatusCell>
          </StatusBar>
        </Window>
      </Desktop>
    </>
  );
}
